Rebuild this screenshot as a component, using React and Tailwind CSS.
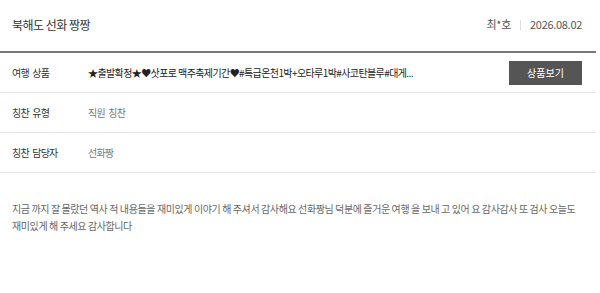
import React from "react";

const font = { fontFamily: '"Noto Sans CJK KR", "Noto Sans", sans-serif' };

const Row = ({ label, children, dark }) => (
  <div className="flex h-10 items-center border-b border-[#e6e6e6] pl-3 pr-[14px]">
    <span className="w-[76px] shrink-0 text-[10px] tracking-[-0.8px] text-[#333] [word-spacing:2px]">{label}</span>
    <div
      className={`flex flex-1 items-center justify-between text-[10px] ${
        dark ? "tracking-[-0.6px] text-[#222]" : "tracking-[-0.8px] text-[#777] [word-spacing:2px]"
      }`}
    >
      {children}
    </div>
  </div>
);

export default function App() {
  return (
    <div className="h-[293px] w-[600px] bg-white" style={font}>
      <div className="w-[596px]">
        <div className="flex h-[53px] items-center justify-between border-b-2 border-[#777] pl-3 pr-[14px] pb-[2px]">
          <h1 className="text-[12px] tracking-[-0.5px] text-[#333]">북해도 선화 짱짱</h1>
          <div className="flex items-center text-[11px] tracking-[-0.3px] text-[#555]">
            <span>최*호</span>
            <span className="mx-[9px] h-[10px] w-px bg-[#ddd]" />
            <span>2026.08.02</span>
          </div>
        </div>

        <Row label="여행 상품" dark>
          <span className="truncate">★출발확정★♥삿포로 맥주축제기간♥#특급온천1박+오타루1박#사코탄블루#대게...</span>
          <button className="ml-4 h-6 w-[73px] shrink-0 bg-[#555] text-[10px] tracking-normal text-white">상품보기</button>
        </Row>

        <Row label="칭찬 유형">
          <span>직원 칭찬</span>
        </Row>

        <Row label="칭찬 담당자">
          <span>선화짱</span>
        </Row>

        <p className="break-keep px-3 pt-[27px] text-[10px] leading-[17px] tracking-[-0.4px] text-[#666]">
          지금 까지 잘 몰랐던 역사 적 내용들을 재미있게 이야기 해 주셔서 감사해요 선화짱님 덕분에 즐거운 여행 을 보내 고 있어 요 감사감사 또 검사 오늘도 재미있게 해 주세요 감사합니다
        </p>
      </div>
    </div>
  );
}
